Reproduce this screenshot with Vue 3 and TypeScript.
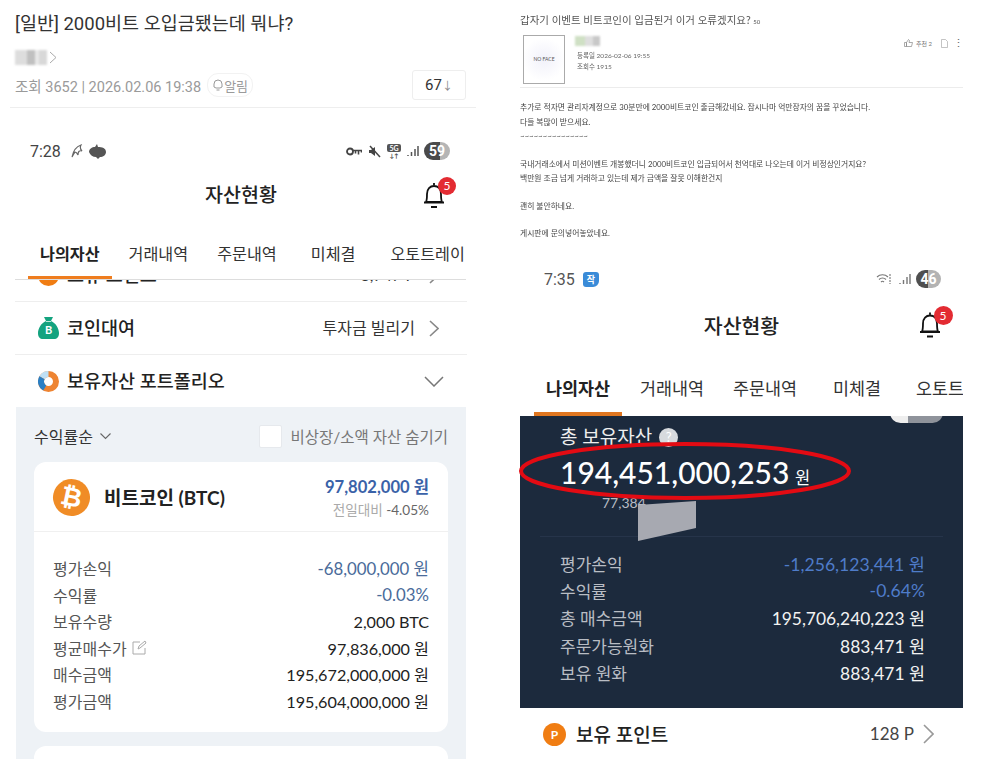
<script setup lang="ts">
interface Row {
  label: string;
  value: string;
  tone?: string;
  edit?: boolean;
}

const tabNames = ["거래내역", "주문내역", "미체결", "오토트레이"];

const leftRows: Row[] = [
  { label: "평가손익", value: "-68,000,000 원", tone: "minus" },
  { label: "수익률", value: "-0.03%", tone: "minus" },
  { label: "보유수량", value: "2,000 BTC" },
  { label: "평균매수가", value: "97,836,000 원", edit: true },
  { label: "매수금액", value: "195,672,000,000 원" },
  { label: "평가금액", value: "195,604,000,000 원" },
];

const rightRows: Row[] = [
  { label: "평가손익", value: "-1,256,123,441 원", tone: "minus" },
  { label: "수익률", value: "-0.64%", tone: "minus" },
  { label: "총 매수금액", value: "195,706,240,223 원" },
  { label: "주문가능원화", value: "883,471 원" },
  { label: "보유 원화", value: "883,471 원" },
];
</script>

<template>
  <div class="page">
    <section class="left">
      <header class="post">
        <h1>[일반] 2000비트 오입금됐는데 뭐냐?</h1>
        <div class="author">
          <span class="mosaic"></span>
          <svg width="8" height="13" viewBox="0 0 8 13"><path d="M1 1l6 5.5-6 5.5" fill="none" stroke="#aaa" stroke-width="1" /></svg>
        </div>
        <div class="meta">
          <span>조회 3652 | 2026.02.06 19:38</span>
          <span class="alarm">
            <svg width="10" height="13" viewBox="0 0 10 13"><path d="M5 1a4 4 0 0 1 4 4v3l-2 1H3L1 8V5a4 4 0 0 1 4-4zM3.5 11h3" fill="none" stroke="#999" stroke-width="1" /></svg>
            알림
          </span>
          <span class="count">67<small>↓</small></span>
        </div>
      </header>

      <div class="status">
        <span class="time">7:28</span>
        <svg class="first" width="12" height="14" viewBox="0 0 12 14"><path d="M1 13C2 8 4 3 10 1 9 3 9 5 11 7 8 6 7 8 7 11 6 9 5 8 4 8 3 9 2 11 1 13z" fill="none" stroke="#666" stroke-width="1.2" /></svg>
        <svg width="18" height="15" viewBox="0 0 18 15"><path d="M8 0l1 3c4 0 8 1 8 5 0 3-3 5-6 5l-2 2-2-2c-3 0-6-2-7-5 0-3 3-5 6-5z" fill="#555" /></svg>
        <span class="grow"></span>
        <svg width="16" height="9" viewBox="0 0 16 9"><circle cx="4" cy="4.5" r="3" fill="none" stroke="#444" stroke-width="1.8" /><path d="M7 3.5h8.500v2M12.5 3.500v4M9.500 3.500v3" stroke="#444" stroke-width="1.6" fill="none" /></svg>
        <svg width="13" height="13" viewBox="0 0 13 13"><path d="M1 5h2l4-3v9L3 8H1z" fill="#444" /><path d="M2 1l10 11" stroke="#444" stroke-width="1.5" /></svg>
        <span class="five-g"><u>5G</u><i>↓↑</i></span>
        <svg width="12" height="12" viewBox="0 0 12 12"><path d="M1 11v-1M4.5 11V7M8 11V4M11 11V1" stroke="#555" stroke-width="1.5" /></svg>
        <span class="battery">59</span>
      </div>

      <div class="title-bar">
        <strong>자산현황</strong>
        <span class="bell">
          <svg width="24" height="26" viewBox="0 0 24 26"><path d="M12 3V1M4 20c1-2 1-4 1-8 0-5 3-8 7-8s7 3 7 8c0 4 0 6 1 8zM2 20.5h20M9 25h6" fill="none" stroke="#111" stroke-width="1.8" /></svg>
          <b>5</b>
        </span>
      </div>

      <nav class="tabs">
        <span class="tab on">나의자산</span>
        <span v-for="t in tabNames" :key="t" class="tab">{{ t }}</span>
      </nav>

      <div class="scroll">
        <div class="line first-line">
          <span class="dot">P</span>
          <span class="name">보유 포인트</span>
          <span class="val">3,747 P</span>
          <svg class="chev" width="10" height="17" viewBox="0 0 10 17"><path d="M1 1l8 7.5-8 7.500" fill="none" stroke="#888" stroke-width="1.6" /></svg>
        </div>
        <div class="line">
          <svg class="ico" width="21" height="22" viewBox="0 0 21 22">
            <path d="M6 0h9l-2 4c5 2 8 8 8 12 0 4-2 6-5 6H5c-3 0-5-2-5-6 0-4 3-10 8-12z" fill="#14a37f" />
            <path d="M8 4.500h5" stroke="#bfe8da" stroke-width="1" />
            <text x="10.5" y="17" text-anchor="middle" class="bag">B</text>
          </svg>
          <span class="name">코인대여</span>
          <span class="val">투자금 빌리기</span>
          <svg class="chev" width="10" height="17" viewBox="0 0 10 17"><path d="M1 1l8 7.5-8 7.500" fill="none" stroke="#888" stroke-width="1.6" /></svg>
        </div>
        <div class="line plain">
          <svg class="ico" width="21" height="21" viewBox="0 0 21 21">
            <circle cx="10.5" cy="10.5" r="7.5" fill="none" stroke="#ee8432" stroke-width="6" />
            <path d="M4 6.750A7.500 7.500 0 0 1 10.500 3" fill="none" stroke="#bfe0f5" stroke-width="6" />
            <path d="M6.750 17A7.500 7.500 0 0 1 4 6.750" fill="none" stroke="#2a7fc4" stroke-width="6" />
          </svg>
          <span class="name">보유자산 포트폴리오</span>
          <svg class="down" width="20" height="11" viewBox="0 0 20 11"><path d="M1 1l9 9 9-9" fill="none" stroke="#777" stroke-width="1.5" /></svg>
        </div>

        <div class="panel">
          <div class="filter">
            <span class="sort">수익률순</span>
            <svg width="11" height="7" viewBox="0 0 11 7"><path d="M.5.5l5 5 5-5" fill="none" stroke="#666" stroke-width="1.1" /></svg>
            <span class="grow"></span>
            <span class="check"></span>
            <span class="hide">비상장/소액 자산 숨기기</span>
          </div>
          <article class="card">
            <div class="coin-head">
              <span class="btc">₿</span>
              <strong>비트코인 (BTC)</strong>
              <div class="price">
                <b>97,802,000 원</b>
                <small><em>전일대비</em> -4.05%</small>
              </div>
            </div>
            <dl class="stats">
              <div v-for="r in leftRows" :key="r.label" class="stat">
                <dt>
                  {{ r.label }}
                  <svg v-if="r.edit" width="15" height="15" viewBox="0 0 15 15"><path d="M8 2H1v12h12V8M6 9l1-3 6-5 1 2-6 5z" fill="none" stroke="#aaa" stroke-width="1" /></svg>
                </dt>
                <dd :class="r.tone">{{ r.value }}</dd>
              </div>
            </dl>
          </article>
          <article class="card next"></article>
        </div>
      </div>
    </section>

    <section class="right">
      <div class="notice">
        <h2>갑자기 이벤트 비트코인이 입금된거 이거 오류겠지요? <small>50</small></h2>
        <div class="writer">
          <div class="noface">NO FACE</div>
          <div class="who">
            <span class="mosaic green"></span>
            <p>등록일 2026-02-06 19:55</p>
            <p>조회수 1915</p>
          </div>
          <div class="tools">
            <svg width="9" height="8" viewBox="0 0 9 8"><path d="M.5 3.5h2v4h-2zM2.5 3.5l2-3 1 1-.5 2h3.500l-1 4h-5z" fill="none" stroke="#888" stroke-width=".7" /></svg>
            <span>추천 2</span>
            <svg class="doc" width="7" height="9" viewBox="0 0 7 9"><path d="M.5.5h4l2 2v6h-6z" fill="none" stroke="#aaa" stroke-width=".7" /></svg>
            <span class="kebab">⋮</span>
          </div>
        </div>
        <div class="body">
          <p>추가로 적자면 관리자계정으로 30분만에 2000비트코인 출금해갔네요. 잠시나마 억만장자의 꿈을 꾸었습니다.</p>
          <p>다들 복많이 받으세요.</p>
          <p>~~~~~~~~~~~~~~~</p>
          <p class="gap">국내거래소에서 미션이벤트 개봉했더니 2000비트코인 입금되어서 천억대로 나오는데 이거 비정상인거지요?</p>
          <p>백만원 조금 넘게 거래하고 있는데 제가 금액을 잘못 이해한건지</p>
          <p class="gap">괜히 불안하네요.</p>
          <p class="gap">게시판에 문의넣어놓았네요.</p>
        </div>
      </div>

      <div class="status two">
        <span class="time">7:35</span>
        <span class="app">작</span>
        <span class="grow"></span>
        <svg width="17" height="12" viewBox="0 0 17 12"><path d="M1 4c3-3 8-3 11 0M3 6.5c2-2 5-2 7 0M5 9c1-1 2-1 3 0" fill="none" stroke="#777" stroke-width="1.1" /><path d="M14 1v10" stroke="#777" stroke-width="1.1" stroke-dasharray="2 1" /></svg>
        <svg width="12" height="12" viewBox="0 0 12 12"><path d="M1 11v-1M4.5 11V7M8 11V4M11 11V1" stroke="#777" stroke-width="1.4" /></svg>
        <span class="battery low">46</span>
      </div>

      <div class="title-bar two">
        <strong>자산현황</strong>
        <span class="bell">
          <svg width="24" height="27" viewBox="0 0 24 26"><path d="M12 3V1M4 20c1-2 1-4 1-8 0-5 3-8 7-8s7 3 7 8c0 4 0 6 1 8zM2 20.5h20M9 25h6" fill="none" stroke="#111" stroke-width="1.8" /></svg>
          <b>5</b>
        </span>
      </div>

      <nav class="tabs two">
        <span class="tab on">나의자산</span>
        <span v-for="t in tabNames" :key="t" class="tab">{{ t }}</span>
      </nav>

      <div class="dark">
        <span class="toggle"></span>
        <div class="total-label">총 보유자산 <i>?</i></div>
        <div class="total"><b>194,451,000,253</b> <span>원</span></div>
        <div class="sub">77,384</div>
        <dl class="stats light">
          <div v-for="r in rightRows" :key="r.label" class="stat">
            <dt>{{ r.label }}</dt>
            <dd :class="r.tone">{{ r.value }}</dd>
          </div>
        </dl>
        <svg class="censor" width="60" height="42" viewBox="0 0 60 42"><path d="M0 4 58 0V27L0 40z" fill="#a7a9b1" /></svg>
      </div>
      <svg class="ring" width="336" height="62" viewBox="0 0 336 62"><ellipse cx="168" cy="31" rx="164" ry="27" fill="none" stroke="#e30b13" stroke-width="4" /></svg>

      <div class="point">
        <span class="dot big">P</span>
        <span class="name">보유 포인트</span>
        <span class="val">128 P</span>
        <svg width="11" height="20" viewBox="0 0 11 20"><path d="M1 1l9 9-9 9" fill="none" stroke="#999" stroke-width="1.6" /></svg>
      </div>
    </section>
  </div>
</template>

<style>
html,
body {
  margin: 0;
  height: 759px;
  overflow: hidden;
  background: #fff;
}
</style>

<style scoped>
.page {
  display: flex;
  width: 1000px;
  height: 759px;
  overflow: hidden;
  background: #fff;
  color: #222;
  font-family: "Lato", "Noto Sans CJK KR", sans-serif;
}
.grow {
  flex: 1;
}
.left {
  width: 490px;
  flex: none;
}
.post {
  height: 108px;
  box-sizing: border-box;
  margin: 0 14px 0 10px;
  padding: 12px 0 0 5px;
  border-bottom: 1px solid #eee;
  font-family: "Roboto", "Noto Sans CJK KR", sans-serif;
}
.post h1 {
  margin: 0;
  font-size: 18.5px;
  font-weight: 400;
  line-height: 24px;
  color: #333;
}
.author {
  display: flex;
  align-items: center;
  gap: 2px;
  height: 18px;
  margin-top: 12px;
}
.mosaic {
  display: block;
  width: 32px;
  height: 15px;
  background: linear-gradient(90deg, #ddd 0 12px, #c0c0c0 12px 20px, #e8e8e8 20px 24px, #d8d8d8 24px);
  filter: blur(1px);
}
.meta {
  display: flex;
  align-items: center;
  margin-top: 4px;
  height: 30px;
  font-size: 14.5px;
  color: #9a9a9a;
}
.alarm {
  display: flex;
  align-items: center;
  gap: 1px;
  height: 22px;
  margin-left: 6px;
  padding: 0 4px 0 5px;
  font-size: 13px;
  border: 1px solid #f2f2f2;
  border-radius: 11px;
}
.count {
  display: block;
  margin-left: auto;
  margin-right: 10px;
  width: 54px;
  height: 30px;
  box-sizing: border-box;
  border: 1px solid #eee;
  border-radius: 3px;
  text-align: center;
  line-height: 28px;
  color: #333;
  font-size: 15px;
}
.count small {
  font-size: 11px;
  color: #888;
}
.status {
  display: flex;
  align-items: center;
  gap: 6px;
  height: 18px;
  margin-top: 34px;
  padding: 0 40px 0 30px;
}
.status .time {
  font-family: "Roboto", sans-serif;
  font-size: 16px;
  color: #444;
  margin-right: 4px;
}
.five-g {
  display: block;
  width: 14px;
  font-size: 7px;
  font-weight: 700;
  line-height: 8px;
  text-align: center;
  color: #444;
}
.five-g u {
  display: block;
  border-radius: 2px;
  background: #555;
  color: #fff;
  text-decoration: none;
}
.five-g i {
  display: block;
  font-style: normal;
  font-size: 6px;
  line-height: 7px;
}
.battery {
  width: 26px;
  height: 18px;
  margin-left: -1px;
  border-radius: 9px;
  background: linear-gradient(90deg, #4a4a4a 0 62%, #b5b5b5 62%);
  color: #fff;
  font-family: "Roboto", sans-serif;
  font-size: 14px;
  font-weight: 700;
  line-height: 18px;
  text-align: center;
}
.title-bar {
  position: relative;
  display: flex;
  justify-content: center;
  align-items: center;
  height: 50px;
  margin-top: 9px;
  padding-right: 8px;
}
.title-bar strong {
  margin-bottom: 2px;
  font-size: 19.5px;
  font-weight: 500;
  color: #222;
}
.bell {
  position: absolute;
  left: 422px;
  top: 13px;
  line-height: 0;
}
.bell b {
  position: absolute;
  left: 16px;
  top: -5px;
  width: 18px;
  height: 18px;
  border-radius: 50%;
  background: #e32b32;
  color: #fff;
  font-size: 12px;
  font-weight: 400;
  line-height: 18px;
  text-align: center;
}
.tabs {
  display: flex;
  gap: 29px;
  height: 61px;
  box-sizing: border-box;
  margin: 0 24px 0 15px;
  border-bottom: 1px solid #ddd;
  overflow: hidden;
  white-space: nowrap;
}
.tab {
  flex: none;
  height: 100%;
  box-sizing: border-box;
  padding-top: 23px;
  font-size: 16.2px;
  line-height: 24px;
  color: #333;
}
.tab:nth-child(4) {
  margin-left: 5px;
}
.tab:nth-child(5) {
  margin-left: 6px;
}
.tab.on {
  margin: 0 -12px 0 13px;
  padding: 23px 12px 0;
  font-weight: 700;
  color: #222;
  border-bottom: 3px solid #ef7d1e;
}
.scroll {
  height: 479px;
  overflow: hidden;
}
.line {
  display: flex;
  align-items: center;
  height: 53px;
  box-sizing: border-box;
  margin: 0 23px 0 15px;
  padding: 0 28px 0 23px;
  border-bottom: 1px solid #eee;
}
.first-line {
  margin-top: -31px;
}
.line.plain {
  height: 52px;
  border-bottom: 0;
  padding-right: 23px;
}
.ico {
  flex: none;
}
.bag {
  font-family: "Lato", sans-serif;
  font-size: 11px;
  font-weight: 700;
  fill: #fff;
}
.dot {
  flex: none;
  width: 21px;
  height: 21px;
  border-radius: 50%;
  background: #f07d13;
  color: #fff;
  font-size: 12px;
  font-weight: 700;
  line-height: 21px;
  text-align: center;
}
.name {
  margin: 0 0 2px 8px;
  font-size: 18.5px;
  font-weight: 500;
  color: #222;
}
.val {
  margin: 0 0 2px auto;
  font-size: 16px;
  color: #333;
}
.chev {
  margin-left: 14px;
}
.down {
  margin-left: auto;
}
.panel {
  height: 352px;
  box-sizing: border-box;
  margin: 0 24px 0 16px;
  padding: 0 18px;
  background: #eef2f6;
}
.filter {
  display: flex;
  align-items: center;
  height: 55px;
  box-sizing: border-box;
  padding-top: 3px;
  font-size: 15.5px;
  color: #333;
}
.sort {
  font-size: 16px;
}
.filter svg {
  margin-left: 7px;
}
.check {
  width: 23px;
  height: 23px;
  box-sizing: border-box;
  border: 1px solid #e6e9ed;
  border-radius: 2px;
  background: #fff;
}
.hide {
  margin-left: 8px;
  color: #777;
}
.card {
  background: #fff;
  border-radius: 12px;
}
.card.next {
  height: 40px;
  margin-top: 14px;
}
.coin-head {
  display: flex;
  align-items: center;
  height: 70px;
  box-sizing: border-box;
  padding: 2px 19px 0;
  border-bottom: 1px solid #f0f0f0;
}
.btc {
  flex: none;
  width: 37px;
  height: 37px;
  border-radius: 50%;
  background: #f08c26;
  color: #fff;
  font-family: "DejaVu Sans", sans-serif;
  font-size: 26px;
  font-weight: 700;
  line-height: 37px;
  text-align: center;
  transform: rotate(12deg);
}
.coin-head strong {
  margin: 0 0 2px 14px;
  font-size: 19px;
  font-weight: 700;
  color: #222;
}
.price {
  display: flex;
  flex-direction: column;
  align-items: flex-end;
  margin-left: auto;
}
.price b {
  font-size: 16.6px;
  font-weight: 700;
  line-height: 24px;
  color: #3a62a8;
}
.price small {
  font-size: 13.6px;
  line-height: 22px;
  color: #666;
}
.price em {
  font-style: normal;
  color: #aaa;
}
.stats {
  margin: 0;
  padding: 23px 19px 18px;
}
.stat {
  display: flex;
  justify-content: space-between;
  align-items: center;
  height: 26.5px;
  font-size: 16px;
}
.stat dt {
  display: flex;
  align-items: center;
  gap: 5px;
  color: #555;
}
.stat dd {
  margin: 0;
  font-size: 16.2px;
  color: #222;
}
.stat dd.minus {
  font-size: 16.8px;
  color: #4a6b9a;
}
.right {
  position: relative;
  flex: 1;
  padding-left: 30px;
}
.notice {
  height: 258px;
  box-sizing: border-box;
  width: 443px;
  padding-top: 12px;
  color: #444;
}
.notice h2 {
  height: 16px;
  margin: 0;
  font-size: 10.5px;
  font-weight: 400;
  line-height: 16px;
  color: #555;
  filter: blur(0.3px);
}
.notice h2 small {
  font-size: 6px;
}
.writer {
  display: flex;
  height: 53px;
  box-sizing: border-box;
  margin-top: 7px;
  padding-left: 3px;
  border-bottom: 1px solid #ececec;
}
.noface {
  width: 42px;
  height: 49px;
  box-sizing: border-box;
  border: 1px solid #aaa;
  font-size: 5px;
  line-height: 47px;
  text-align: center;
  color: #555;
  background: radial-gradient(circle, #f1f1fa, #fff 70%);
}
.who {
  margin-left: 10px;
  font-size: 6.5px;
  color: #666;
  filter: blur(0.2px);
}
.who p {
  margin: 0;
  padding-left: 2px;
  line-height: 11px;
}
.mosaic.green {
  width: 25px;
  height: 10px;
  margin: 1px 0 4px;
  background: linear-gradient(90deg, #cfe0c4 0 10px, #dedede 10px 18px, #c8c8c8 18px);
}
.tools {
  display: flex;
  align-items: center;
  gap: 3px;
  height: 16px;
  margin-left: auto;
  font-size: 6px;
  color: #777;
}
.tools .doc {
  margin-left: 6px;
}
.kebab {
  margin: 0 -1px 0 2px;
  font-size: 11px;
  color: #666;
}
.body {
  margin-top: 12px;
  font-size: 7.8px;
  line-height: 14.5px;
  filter: blur(0.2px);
}
.body p {
  margin: 0;
}
.body p.gap {
  margin-top: 13px;
}
.status.two {
  margin-top: 12px;
  padding: 0 59px 0 24px;
}
.status.two .time {
  margin-right: 2px;
  color: #555;
}
.app {
  width: 16px;
  height: 15px;
  border-radius: 3px 3px 6px 3px;
  background: #3a8bd8;
  color: #fff;
  font-size: 9px;
  font-weight: 700;
  line-height: 15px;
  text-align: center;
}
.battery.low {
  width: 25px;
  background: linear-gradient(90deg, #4f4f4f 0 50%, #b3b3b3 50%);
}
.title-bar.two {
  width: 443px;
  height: 58px;
  margin-top: 8px;
  padding-right: 0;
}
.title-bar.two strong {
  margin-bottom: 0;
  font-size: 20.5px;
}
.title-bar.two .bell {
  left: 398px;
  top: 15px;
}
.title-bar.two .bell b {
  left: 15.5px;
  top: -5.5px;
  width: 19px;
  height: 19px;
  line-height: 19px;
}
.tabs.two {
  width: 443px;
  margin: 1px 0 0;
  height: 61px;
  gap: 31px;
  border-bottom: 0;
}
.tabs.two .tab {
  padding-top: 22px;
  font-size: 17.4px;
}
.tabs.two .tab:nth-child(3) {
  margin-left: -2px;
}
.tabs.two .tab:nth-child(4) {
  margin-left: 5px;
}
.tabs.two .tab:nth-child(5) {
  margin-left: 4px;
}
.tabs.two .tab.on {
  margin: 0 -13px 0 14px;
  padding: 22px 12px 0;
  border-bottom: 4px solid #e0761f;
}
.dark {
  position: relative;
  width: 443px;
  height: 292px;
  box-sizing: border-box;
  padding-top: 10px;
  overflow: hidden;
  background: #1c2a3d;
  color: #eee;
}
.toggle {
  position: absolute;
  right: 20px;
  top: -14px;
  width: 53px;
  height: 21px;
  border-radius: 11px;
  background: linear-gradient(90deg, #eee 0 18px, #8f939b 18px);
}
.total-label {
  display: flex;
  align-items: center;
  gap: 7px;
  margin-left: 40px;
  font-size: 19px;
  line-height: 22px;
}
.total-label i {
  width: 19px;
  height: 19px;
  border-radius: 50%;
  background: #d7dade;
  color: #fff;
  font-size: 13px;
  font-style: normal;
  line-height: 19px;
  text-align: center;
}
.total {
  margin: 4px 0 0 40px;
  font-size: 30px;
  line-height: 40px;
  color: #fff;
}
.total b {
  font-weight: 500;
}
.total span {
  margin-left: -2px;
  font-size: 16.5px;
}
.sub {
  height: 38px;
  margin: 0 0 0 82px;
  font-size: 14px;
  line-height: 10px;
  color: #b8bcc4;
}
.stats.light {
  margin: 0 20px;
  padding: 12.5px 18px 0 20px;
  border-top: 1px solid #26344a;
}
.light .stat {
  height: 27.4px;
  font-size: 17px;
}
.light .stat dt {
  color: #b9bdc4;
}
.light .stat dd {
  font-size: 17.4px;
  color: #f2f2f2;
}
.light .stat dd.minus {
  font-size: 17.6px;
  color: #4f7cc9;
}
.censor {
  position: absolute;
  left: 117.7px;
  top: 85px;
}
.ring {
  position: absolute;
  left: 26.5px;
  top: 439.5px;
}
.point {
  display: flex;
  align-items: center;
  width: 443px;
  height: 51px;
  box-sizing: border-box;
  padding: 1px 29px 0 23px;
}
.dot.big {
  width: 23px;
  height: 23px;
  line-height: 23px;
}
.point .name {
  margin-left: 10px;
  font-size: 19px;
}
.point .val {
  margin-right: 9px;
  font-size: 17px;
  color: #444;
}
</style>
